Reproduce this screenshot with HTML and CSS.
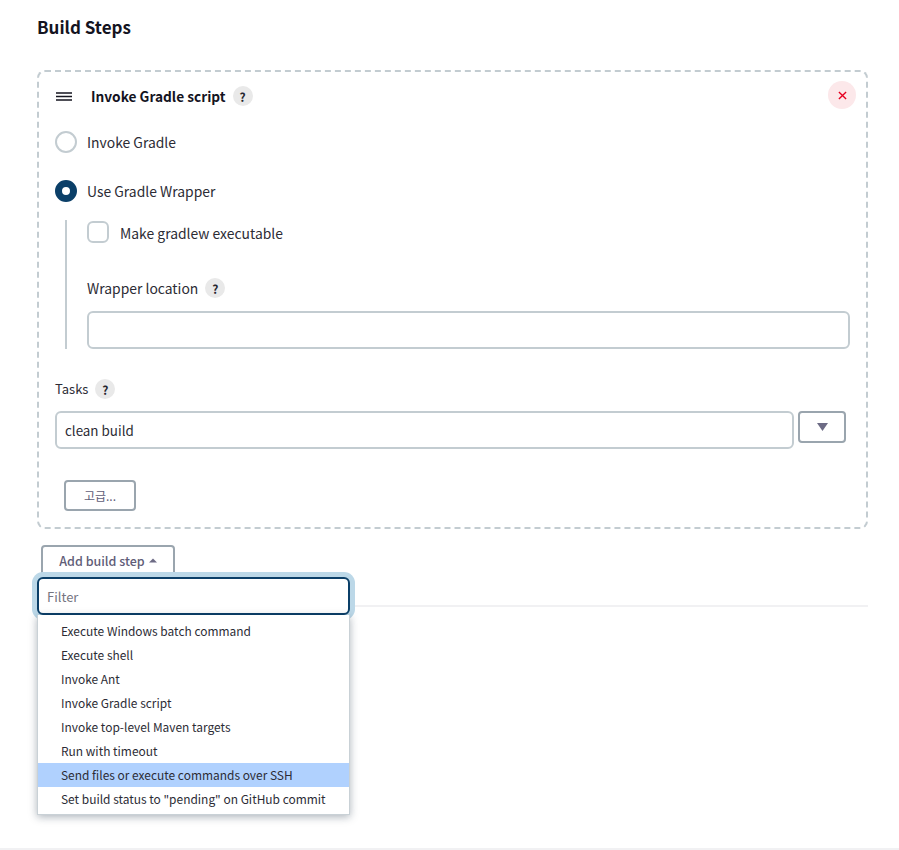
FILE: index.html
```html
<!DOCTYPE html>
<html lang="en">
<head>
<meta charset="utf-8">
<title>Build Steps</title>
<link rel="stylesheet" href="styles.css">
</head>
<body>
<main class="page">
  <h2 class="section-title">Build Steps</h2>
  <section class="step">
    <div class="step-head">
      <svg class="grip" viewBox="0 0 16 9" width="16" height="9"><path d="M0 1h16M0 4.500h16M0 8h16" stroke="#14141f" stroke-width="1.300" fill="none"/></svg>
      <span class="step-title">Invoke Gradle script</span>
      <span class="help">?</span>
      <button class="close" aria-label="Close"><svg viewBox="0 0 10 10" width="9" height="9"><path d="M1 1l8 8M9 1l-8 8" stroke="#e6001f" stroke-width="1.500" fill="none"/></svg></button>
    </div>
    <div class="radio-row first"><span class="radio"></span><span class="label">Invoke Gradle</span></div>
    <div class="radio-row second"><span class="radio on"></span><span class="label">Use Gradle Wrapper</span></div>
    <div class="nested">
      <div class="check-row"><span class="check"></span><span class="label">Make gradlew executable</span></div>
      <div class="field-label wrapper-label"><span class="label">Wrapper location</span><span class="help">?</span></div>
      <div class="input wrapper-input"></div>
    </div>
    <div class="field-label tasks-label"><span class="label tasks-text">Tasks</span><span class="help">?</span></div>
    <div class="task-row">
      <div class="input task-input">clean build</div>
      <button class="btn drop"><svg viewBox="0 0 11 8" width="11" height="8"><path d="M0 0h11L5.500 8z" fill="#6d6b85"/></svg></button>
    </div>
    <button class="btn advanced">고급...</button>
  </section>
  <div class="add-area">
    <button class="btn add">Add build step <svg viewBox="0 0 8 5" width="8" height="5"><path d="M0 4.500h8L4 .5z" fill="#6d6b85"/></svg></button>
    <div class="rule"></div>
    <div class="dropdown">
      <div class="filter">Filter</div>
      <ul class="menu">
        <li>Execute Windows batch command</li>
        <li>Execute shell</li>
        <li>Invoke Ant</li>
        <li>Invoke Gradle script</li>
        <li>Invoke top-level Maven targets</li>
        <li>Run with timeout</li>
        <li class="active">Send files or execute commands over SSH</li>
        <li>Set build status to "pending" on GitHub commit</li>
      </ul>
    </div>
  </div>
  <div class="bottom-rule"></div>
</main>
</body>
</html>
```
FILE: styles.css
```css
* { box-sizing: border-box; }
html, body { margin: 0; padding: 0; background: #fff; }
body { font-family: "Noto Sans CJK KR", "Noto Sans", sans-serif; font-size: 13px; color: #14141f; overflow: hidden; }
.page { height: 850px; padding: 0 31px 0 37px; display: flex; flex-direction: column; overflow: hidden; }
.section-title { margin: 15px 0 0; height: 24px; line-height: 24px; font-size: 17px; font-weight: 700; }
.step { margin-top: 31px; height: 459px; flex: none; border: 2px dashed #c3ccd1; border-radius: 8px; padding: 0 17px 0 16px; display: flex; flex-direction: column; align-items: stretch; }
.step-head { display: flex; align-items: center; height: 48px; padding-left: 1px; flex: none; }
.grip { flex: none; }
.step-title { margin-left: 19px; font-weight: 700; font-size: 13.7px; }
.label { font-size: 13.9px; color: #2c2c35; }
.tasks-text { font-size: 13px; margin-bottom: 2px; }
.help { flex: none; width: 20px; height: 20px; border-radius: 50%; background: #e9e9e9; color: #26262f; font-size: 12px; font-weight: 700; display: flex; align-items: center; justify-content: center; margin-left: 7px; }
.close { margin-left: auto; margin-right: -7px; margin-bottom: 2px; width: 28px; height: 28px; border: 0; padding: 0; border-radius: 50%; background: #fce8ea; display: flex; align-items: center; justify-content: center; }
.radio-row { display: flex; align-items: center; height: 22px; gap: 10px; flex: none; }
.radio-row.first { margin-top: 11px; }
.radio-row.second { margin-top: 27px; }
.radio { width: 22px; height: 22px; border-radius: 50%; border: 2px solid #c3ccd1; flex: none; }
.radio.on { border: 7.500px solid #0b3f68; background: #fff; }
.nested { margin: 18px 0 0 10px; border-left: 2px solid #c3ccd1; padding: 1px 0 0 20px; height: 129px; flex: none; }
.check-row { display: flex; align-items: center; height: 22px; gap: 11px; }
.check-row .label { padding-top: 1px; }
.check { width: 22px; height: 22px; border: 2px solid #c3ccd1; border-radius: 6px; flex: none; }
.field-label { display: flex; align-items: center; height: 20px; flex: none; }
.wrapper-label { margin-top: 35px; }
.input { height: 38px; border: 2px solid #c3ccd1; border-radius: 6px; background: #fff; width: 763px; }
.wrapper-input { margin-top: 13px; }
.tasks-label { margin-top: 30px; }
.task-row { display: flex; align-items: flex-start; gap: 4px; margin-top: 12px; flex: none; }
.task-input { width: 739px; padding-left: 8px; line-height: 34px; font-size: 13.4px; color: #2c2c35; }
.btn { font-family: inherit; background: #fff; border: 2px solid #9aa5ae; border-radius: 4px; color: #5f5d78; font-size: 12px; display: flex; align-items: center; justify-content: center; padding: 0; flex: none; }
.drop { width: 48px; height: 32px; }
.advanced { width: 72px; height: 31px; margin: 31px 0 0 9px; }
.add-area { position: relative; flex: 1; }
.add { position: absolute; left: 4px; top: 16px; width: 134px; height: 32px; font-weight: 500; gap: 4px; font-size: 12.500px; padding-bottom: 2px; }
.rule { position: absolute; left: 0; right: 0; top: 76px; height: 2px; background: #f1f1f3; }
.dropdown { position: absolute; left: 0; top: 48px; width: 313px; }
.filter { height: 38px; border: 2px solid #0b3f68; border-radius: 6px; box-shadow: 0 0 0 5px #bcd8e8; background: #fff; color: #75757f; padding-left: 8px; line-height: 36px; font-size: 13px; }
.menu { position: relative; list-style: none; margin: 0; padding: 4px 0 3px; background: #fff; box-shadow: 0 2px 8px rgba(20, 40, 60, .35); border: 1px solid #c9d1d6; border-top: 0; }
.menu li { height: 24px; line-height: 24px; padding-left: 23px; font-size: 11.950px; white-space: nowrap; color: #2c2c35; }
.menu li.active { background: #b0d1fe; }
.bottom-rule { height: 2px; flex: none; background: #f1f1f3; margin-left: -37px; margin-right: -31px; }
```
